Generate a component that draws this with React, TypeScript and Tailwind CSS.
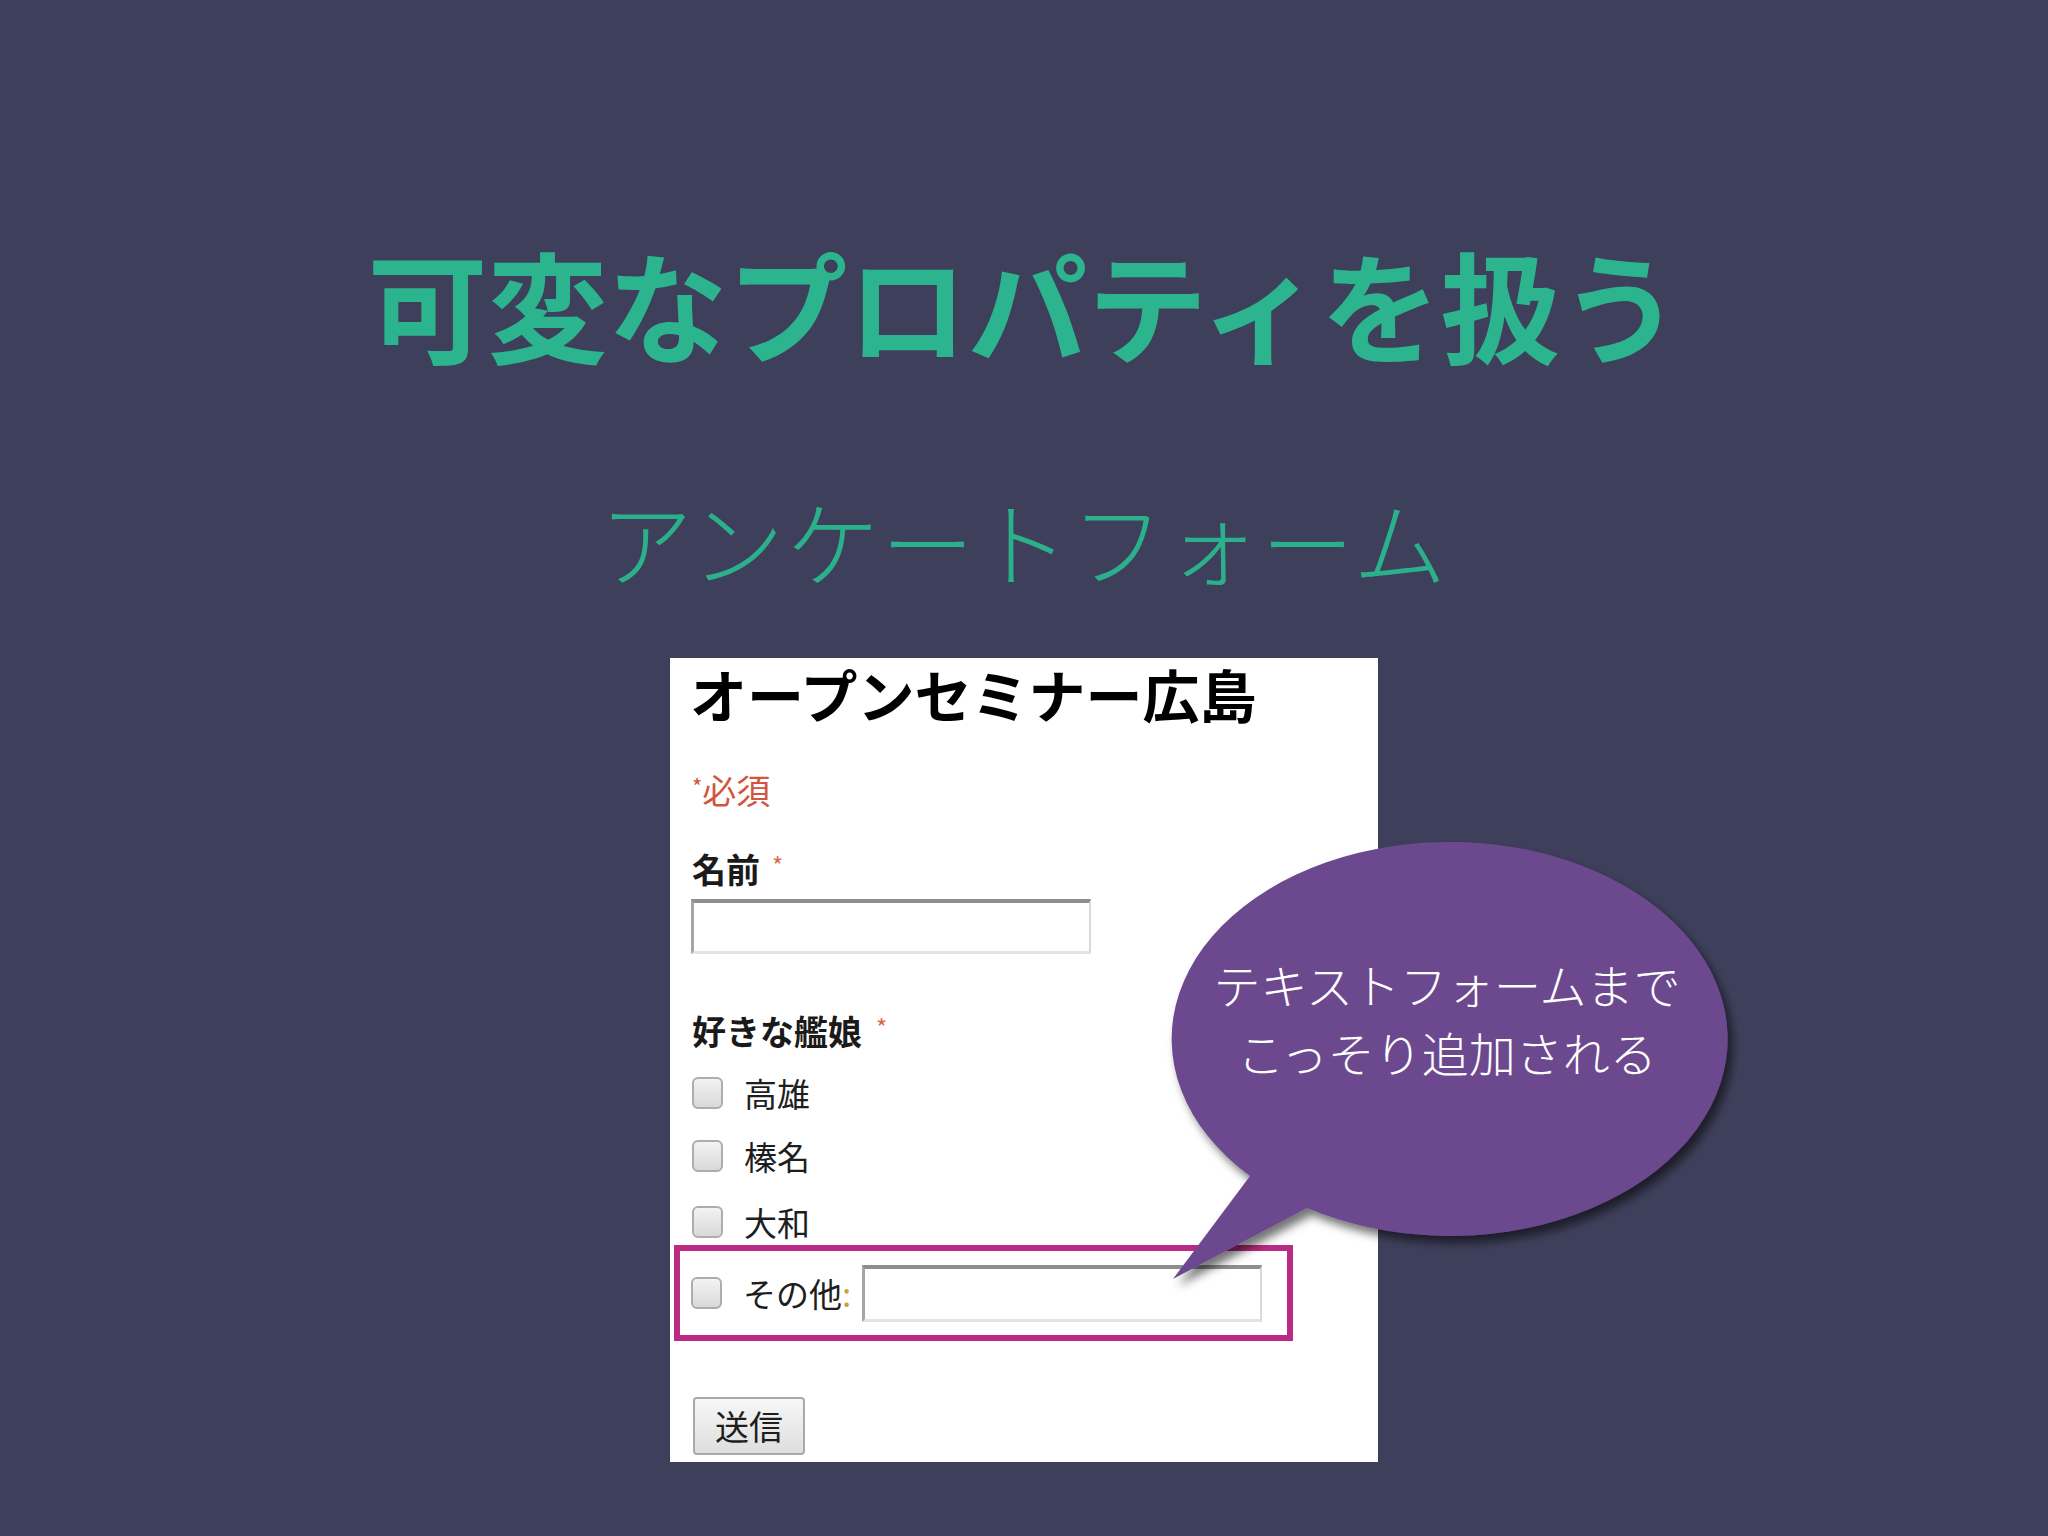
import React from "react";

const jp = { fontFamily: '"Noto Sans CJK JP", "Noto Sans", sans-serif' };

function Checkbox() {
  return (
    <div className="w-[31px] h-[32px] shrink-0 rounded-[6px] border-[2px] border-[#adadad] bg-gradient-to-b from-[#f3f3f3] to-[#d9d9d9]" />
  );
}

function TextInput({ w, h }: { w: string; h: string }) {
  return (
    <div
      className={`${w} ${h} shrink-0 bg-white border-t-[4px] border-t-[#8e8e8e] border-l-[3px] border-l-[#a6a6a6] border-r-[2px] border-r-[#dadada] border-b-[3px] border-b-[#e3e3e3]`}
    />
  );
}

function Row({ label, mt }: { label: string; mt: string }) {
  return (
    <div className={`${mt} h-[32px] flex items-center gap-[21px]`}>
      <Checkbox />
      <span className="text-[33px] leading-none text-[#1e1e1e]">{label}</span>
    </div>
  );
}

export default function App() {
  return (
    <div
      className="relative w-[2048px] h-[1536px] overflow-hidden bg-[#3e3f5a] flex flex-col items-center"
      style={jp}
    >
      <h1 className="mt-[243px] text-[120px] leading-none font-bold text-[#2cb48e] whitespace-nowrap">
        可変なプロパティを扱う
      </h1>
      <h2 className="mt-[130px] text-[93px] leading-none font-light tracking-[2px] text-[#2bb08c] whitespace-nowrap">
        アンケートフォーム
      </h2>

      <div className="mt-[72px] w-[708px] h-[804px] bg-white px-[22px] pt-[7px] flex flex-col items-start">
        <div className="-ml-[2px] text-[57px] leading-none font-bold text-black whitespace-nowrap">
          オープンセミナー広島
        </div>
        <div className="mt-[51px] flex items-start text-[34px] leading-none text-[#d2553f]">
          <span className="text-[22px] leading-none mt-[1px]">*</span>
          <span>必須</span>
        </div>
        <div className="mt-[45px] flex items-start text-[34px] leading-none font-bold text-[#1a1a1a]">
          <span>名前</span>
          <span className="ml-[12px] mt-[1px] text-[24px] leading-none font-normal text-[#d9694a]">*</span>
        </div>
        <div className="mt-[13px] -ml-[1px]">
          <TextInput w="w-[400px]" h="h-[55px]" />
        </div>
        <div className="mt-[60px] flex items-start text-[34px] leading-none font-bold text-[#1a1a1a]">
          <span>好きな艦娘</span>
          <span className="ml-[14px] mt-[1px] text-[24px] leading-none font-normal text-[#d9694a]">*</span>
        </div>
        <Row label="高雄" mt="mt-[29px]" />
        <Row label="榛名" mt="mt-[31px]" />
        <Row label="大和" mt="mt-[34px]" />
        <div className="mt-[7px] -ml-[18px] w-[619px] h-[96px] border-[6px] border-[#bb2b83] pl-[11px] flex items-center">
          <Checkbox />
          <span className="ml-[21px] text-[33px] leading-none text-[#1e1e1e] whitespace-nowrap">
            その他<span className="text-[#c9a13e]">:</span>
          </span>
          <div className="ml-[11px]">
            <TextInput w="w-[400px]" h="h-[57px]" />
          </div>
        </div>
        <div className="mt-[56px] ml-[1px] w-[112px] h-[58px] rounded-[4px] border-[2px] border-[#a9a9a9] bg-gradient-to-b from-[#f7f7f7] to-[#dedede] flex items-center justify-center text-[34px] leading-none text-[#1e1e1e]">
          送信
        </div>
      </div>

      {/* speech bubble */}
      <svg
        className="absolute left-[1140px] top-[820px]"
        width="620"
        height="480"
        viewBox="1140 820 620 480"
      >
        <defs>
          <filter id="sh" x="-20%" y="-20%" width="140%" height="140%">
            <feDropShadow dx="5" dy="7" stdDeviation="5" floodColor="#000" floodOpacity="0.55" />
          </filter>
        </defs>
        <path
          d="M 1250 1176 A 278 197 0 1 1 1307 1208 L 1173 1279 Z"
          fill="#6c4a8e"
          filter="url(#sh)"
        />
      </svg>
      <div className="absolute left-[1147px] top-[950px] w-[600px] text-center text-[47px] leading-[68px] font-light text-white whitespace-nowrap">
        <div>テキストフォームまで</div>
        <div>こっそり追加される</div>
      </div>
    </div>
  );
}
